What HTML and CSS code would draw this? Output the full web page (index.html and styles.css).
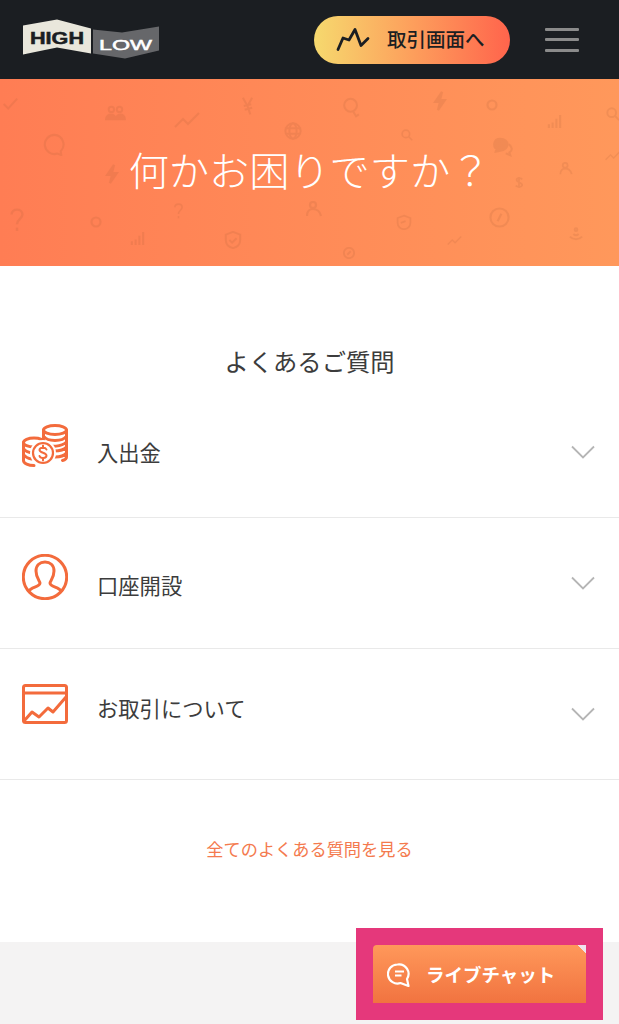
FILE: index.html

```html
<!DOCTYPE html>
<html lang="ja">
<head>
  <meta charset="UTF-8">
  <title>何かお困りですか？</title>
  <link rel="stylesheet" href="styles.css">
</head>
<body>

  <svg class="defs" width="0" height="0">
    <symbol id="i-check" viewBox="0 0 20 20"><path d="M3 10l5 5 10-11"/></symbol>
    <symbol id="i-people" viewBox="0 0 24 20"><circle cx="8" cy="6" r="3"/><circle cx="17" cy="6" r="3"/><path class="fill" d="M2 17c0-7 11-7 11 0zM13 17c0-7 10-7 10 0z"/></symbol>
    <symbol id="i-trend" viewBox="0 0 26 16"><path d="M1 15l8-8 5 5 11-11"/></symbol>
    <symbol id="i-yen" viewBox="0 0 14 20"><path d="M2 1l5 9 5-9M7 10l3 9M3 10l8-2M4 14l8-2"/></symbol>
    <symbol id="i-globe" viewBox="0 0 20 20"><circle cx="10" cy="10" r="8.500"/><ellipse cx="10" cy="10" rx="4" ry="8.500"/><path d="M2 7h16M2 13h16"/></symbol>
    <symbol id="i-bubble" viewBox="0 0 24 24"><path d="M12 2a10 10 0 1 0 3 19.500l4 1.500-.5-4A10 10 0 0 0 12 2z"/></symbol>
    <symbol id="i-bolt" viewBox="0 0 14 20"><path class="fill" d="M9 1L2 11h5l-2 8 7-10H7z"/></symbol>
    <symbol id="i-question" viewBox="0 0 14 22"><path d="M2 6c0-6 10-6 10 0 0 4-5 4-5 9"/><path d="M7 18v3"/></symbol>
    <symbol id="i-gear" viewBox="0 0 14 14"><circle cx="7" cy="7" r="4.500"/></symbol>
    <symbol id="i-bars" viewBox="0 0 16 16"><path d="M2 15v-4M6 15V9M10 15V5M14 15V1"/></symbol>
    <symbol id="i-shield" viewBox="0 0 20 20"><path d="M10 1l8 3v6c0 5-4 8-8 9-4-1-8-4-8-9V4z"/><path d="M6 10l3 3 5-5"/></symbol>
    <symbol id="i-bulb" viewBox="0 0 18 24"><circle cx="8" cy="9" r="7"/><path d="M11 16l3 5 3-2"/></symbol>
    <symbol id="i-search" viewBox="0 0 16 16"><circle cx="6.500" cy="6.500" r="5"/><path d="M10 10l5 5"/></symbol>
    <symbol id="i-chats" viewBox="0 0 24 20"><path class="fill" d="M9 1c5 0 8 3 8 6s-3 7-8 7l-5 1 1-3C1 10 1 1 9 1z"/><path d="M18 7c4 2 5 7 1 9l1 3-5-2"/></symbol>
    <symbol id="i-person" viewBox="0 0 16 16"><circle cx="7" cy="4" r="3"/><path d="M1 15c0-5 3-7 6-7s7 2 8 7"/></symbol>
    <symbol id="i-dollar" viewBox="0 0 10 16"><path d="M9 4C7 2 2 2 2 5s7 3 7 6-6 3-8 1M5 1v14"/></symbol>
    <symbol id="i-face" viewBox="0 0 20 20"><path d="M10 2l8 3v6a8 8 0 0 1-16 0V5z"/><path d="M6 11l6-2"/></symbol>
    <symbol id="i-compass" viewBox="0 0 22 22"><circle cx="11" cy="11" r="9.500"/><path d="M9 15l4-8"/></symbol>
    <symbol id="i-signal" viewBox="0 0 16 16"><circle cx="8" cy="3" r="1.500"/><path d="M5 8c2 2 4 2 6 0M1 11c4 4 10 4 14 0"/></symbol>
    <symbol id="i-clock" viewBox="0 0 14 14"><circle cx="7" cy="7" r="6"/><path d="M5 9l4-4"/></symbol>
  </svg>

  <header class="site-header">
    <a class="logo" href="#">
      <svg width="138" height="42" viewBox="0 0 138 42">
        <polygon points="1,6.500 35,0.500 69,9.500 69,34.500 35,28.500 1,35.500" fill="#e9e7dc"/>
        <polygon points="71,10.500 100,13.500 137,7.500 137,31.500 103,39.500 71,34.500" fill="#66676a"/>
        <text class="logo-high" x="8" y="24.500" textLength="54" lengthAdjust="spacingAndGlyphs">HIGH</text>
        <text class="logo-low" x="77" y="30.500" textLength="53" lengthAdjust="spacingAndGlyphs">LOW</text>
      </svg>
    </a>
    <a class="trade-btn" href="#">
      <svg width="34" height="26" viewBox="0 0 34 26"><path d="M2 22.500L7 11l6 2 6-10.500 6 16 7-7" fill="none" stroke="#1b1e22" stroke-width="2.800" stroke-linecap="round" stroke-linejoin="round"/></svg>
      <span>取引画面へ</span>
    </a>
    <button class="menu-btn" aria-label="menu"><i></i><i></i><i></i></button>
  </header>

  <section class="hero">
    <svg class="hero-icons" width="619" height="187" viewBox="0 0 619 187">
      <use href="#i-check" x="1" y="16" width="18" height="18"/>
      <use href="#i-people" x="104" y="25" width="22" height="18"/>
      <use href="#i-trend" x="174" y="33" width="26" height="16"/>
      <use href="#i-yen" x="241" y="17" width="13" height="20"/>
      <use href="#i-globe" x="284" y="43" width="18" height="18"/>
      <use href="#i-bubble" x="43" y="54" width="23" height="23"/>
      <use href="#i-bolt" x="105" y="85" width="14" height="20"/>
      <use class="heavy" href="#i-question" x="9" y="129" width="16" height="24"/>
      <use class="heavy" href="#i-gear" x="89" y="136" width="14" height="14"/>
      <use href="#i-question" x="172" y="124" width="13" height="16"/>
      <use href="#i-bars" x="130" y="152" width="15" height="15"/>
      <use href="#i-shield" x="224" y="152" width="18" height="18"/>
      <use href="#i-bulb" x="343" y="18" width="17" height="22"/>
      <use href="#i-bolt" x="433" y="12" width="14" height="20"/>
      <use class="heavy" href="#i-gear" x="485" y="19" width="14" height="14"/>
      <use href="#i-bars" x="547" y="35" width="15" height="15"/>
      <use href="#i-search" x="606" y="28" width="14" height="14"/>
      <use href="#i-search" x="401" y="50" width="12" height="12"/>
      <use href="#i-chats" x="492" y="58" width="22" height="20"/>
      <use href="#i-trend" x="605" y="71" width="16" height="11"/>
      <use href="#i-person" x="559" y="83" width="14" height="13"/>
      <use href="#i-dollar" x="515" y="97" width="8" height="13"/>
      <use href="#i-person" x="306" y="122" width="16" height="16"/>
      <use href="#i-face" x="396" y="135" width="16" height="16"/>
      <use href="#i-compass" x="489" y="128" width="21" height="21"/>
      <use href="#i-trend" x="447" y="157" width="15" height="9"/>
      <use href="#i-signal" x="569" y="148" width="14" height="14"/>
      <use href="#i-clock" x="343" y="168" width="12" height="12"/>
    </svg>
    <h1 class="hero-title">何かお困りですか？</h1>
  </section>

  <main class="faq">
    <h2 class="faq-title">よくあるご質問</h2>

    <div class="faq-row">
      <svg class="faq-icon faq-icon-coins" width="46" height="46" viewBox="0 0 46 46">
        <ellipse cx="33" cy="7" rx="11.500" ry="4.500"/>
        <path d="M21.500 7v9M44.500 7v27c0 2-2 3-4 3.500M21.500 13c2 3 6 4.500 11.500 4.500s9.500-1.500 11.500-4.500M24 22c5 2 15 2 20.500-3M32 28c5 0 10-1 12.500-4M33 34c5 0 9-1 11.500-4"/>
        <ellipse cx="12" cy="19.500" rx="10.500" ry="4.500"/>
        <path d="M1.500 19.500v18c0 3 5 5 10.500 5M1.500 25.500c2 3 5 4 9 4.500M1.500 31.500c2 3 5 4 8 4.500"/>
        <circle class="coin" cx="21" cy="30" r="13"/>
        <circle cx="21" cy="30" r="10" stroke-width="2.200"/>
        <path d="M24.500 26.500c-1-2.500-7-2.500-7 .5s7 2.500 7 5.500-6 3.500-7 .5M21 22.500v2.500M21 35v2.500" stroke-width="2"/>
      </svg>
      <span class="faq-label">入出金</span>
      <svg class="chevron" width="24" height="14" viewBox="0 0 24 14"><path d="M1 1.500l11 11 11-11"/></svg>
    </div>

    <div class="faq-row">
      <svg class="faq-icon faq-icon-user" width="46" height="46" viewBox="0 0 46 46">
        <circle cx="23" cy="23" r="21.700"/>
        <path d="M7 37c2-4 11-4 11-8 0-2-4-5-4-12 0-6 4-9 9-9s9 3 9 9c0 7-4 10-4 12 0 4 9 4 11 8"/>
      </svg>
      <span class="faq-label faq-label-low">口座開設</span>
      <svg class="chevron" width="24" height="14" viewBox="0 0 24 14"><path d="M1 1.500l11 11 11-11"/></svg>
    </div>

    <div class="faq-row">
      <svg class="faq-icon faq-icon-chart" width="46" height="40" viewBox="0 0 46 40">
        <rect x="1.500" y="1.500" width="43" height="37" rx="2"/>
        <path d="M1.500 9h43M2 37l8-9 7 5 9-9 5 4 13-15"/>
      </svg>
      <span class="faq-label faq-label-chart">お取引について</span>
      <svg class="chevron" width="24" height="14" viewBox="0 0 24 14"><path d="M1 1.500l11 11 11-11"/></svg>
    </div>

    <a class="faq-all" href="#">全てのよくある質問を見る</a>
  </main>

  <footer class="page-foot"></footer>

  <div class="chat-frame">
    <a class="chat-btn" href="#">
      <svg width="26" height="26" viewBox="0 0 26 26"><path d="M10.500 3.500a9.500 9.500 0 1 0 3 18.500l8 3-1.500-7a9.500 9.500 0 0 0-9.500-14.500z" fill="none" stroke="#fff" stroke-width="2.200" stroke-linejoin="round"/><path d="M8 10.500h9M8 14.500h6.500" stroke="#fff" stroke-width="2" fill="none"/></svg>
      <span>ライブチャット</span>
    </a>
  </div>

</body>
</html>
```

FILE: styles.css

```css
* {
  box-sizing: border-box;
}
html, body {
  margin: 0;
  padding: 0;
}
body {
  position: relative;
  display: flex;
  flex-direction: column;
  height: 1024px;
  overflow: hidden;
  background-color: #fff;
  color: #3c3c3c;
  font-family: "Noto Sans CJK JP", "Noto Sans", sans-serif;
}
a {
  text-decoration: none;
}
.defs {
  position: absolute;
}
symbol {
  fill: none;
  stroke: #a85a34;
  stroke-width: 2.200;
}
symbol .fill {
  fill: #a85a34;
}
.heavy {
  stroke-width: 3.500;
}

/* header */
.site-header {
  display: flex;
  align-items: center;
  flex: 0 0 79px;
  padding: 0 40px 0 22px;
  background-color: #1b1e22;
}
.logo {
  display: block;
  height: 42px;
}
.logo-high {
  font-family: "Liberation Sans", sans-serif;
  font-size: 16px;
  font-weight: 700;
  fill: #1b1e22;
  stroke: #1b1e22;
  stroke-width: .5px;
}
.logo-low {
  font-family: "Liberation Sans", sans-serif;
  font-size: 15.500px;
  fill: #fff;
  stroke: #fff;
  stroke-width: .5px;
}
.trade-btn {
  display: flex;
  align-items: center;
  width: 196px;
  height: 48px;
  margin-left: auto;
  padding-left: 22px;
  border-radius: 24px;
  background: linear-gradient(90deg, #f6d96e 0%, #fd9f5c 50%, #ff644c 100%);
  color: #1b1e22;
  font-size: 19.500px;
  font-weight: 500;
}
.trade-btn span {
  margin: -3px 0 0 17px;
  white-space: nowrap;
}
.menu-btn {
  display: flex;
  flex-direction: column;
  gap: 7.500px;
  width: 34px;
  margin-left: 35px;
  padding: 0;
  border: none;
  background: none;
}
.menu-btn i {
  display: block;
  height: 3px;
  border-radius: 1px;
  background-color: #8b8b8b;
}

/* hero */
.hero {
  position: relative;
  display: flex;
  align-items: center;
  justify-content: center;
  flex: 0 0 187px;
  background: linear-gradient(90deg, #ff7d54 0%, #ff985b 100%);
}
.hero-icons {
  position: absolute;
  top: 0;
  left: 0;
  opacity: .15;
}
.hero-title {
  position: relative;
  margin: -6px 0 0 0;
  color: #fff;
  font-size: 40.200px;
  font-weight: 300;
  line-height: 1;
}

/* faq */
.faq {
  display: flex;
  flex-direction: column;
  flex: 0 0 676px;
}
.faq-title {
  height: 121px;
  margin: 0;
  padding-top: 78px;
  color: #3c3c3c;
  font-size: 24.300px;
  font-weight: 400;
  line-height: 34px;
  text-align: center;
}
.faq-row {
  display: flex;
  align-items: center;
  height: 131px;
  padding: 0 24px 0 22px;
  border-bottom: 1px solid #e9e9e9;
}
.faq-icon {
  flex: none;
  width: 46px;
  fill: none;
  stroke: #f36b3c;
  stroke-width: 3;
  stroke-linejoin: round;
  stroke-linecap: round;
}
.faq-icon .coin {
  fill: #fff;
  stroke: none;
}
.faq-icon-coins {
  margin-bottom: 12px;
}
.faq-icon-user {
  margin-bottom: 12px;
}
.faq-icon-chart {
  margin-bottom: 20px;
}
.faq-label {
  margin: 0 0 0 29px;
  font-size: 21.300px;
  line-height: 30px;
}
.faq-label-low {
  margin-top: 4px;
}
.faq-label-chart {
  margin-top: -12px;
}
.chevron {
  margin-left: auto;
  fill: none;
  stroke: #b5b5b5;
  stroke-width: 1.800;
}
.faq-all {
  margin-top: 56px;
  color: #f47a4e;
  font-size: 17.200px;
  line-height: 25px;
  text-align: center;
}

.page-foot {
  flex: 1;
  background-color: #f4f3f3;
}

/* chat */
.chat-frame {
  position: absolute;
  top: 928px;
  left: 356px;
  width: 247px;
  height: 92px;
  padding: 17px;
  background-color: #e5387b;
}
.chat-btn {
  display: flex;
  align-items: center;
  height: 58px;
  padding-left: 14px;
  border-radius: 4px 0 0 0;
  background: linear-gradient(225deg, #efe3ee 0, #efe3ee 6px, transparent 6px),
    linear-gradient(180deg, #ff985a 0%, #f17340 100%);
  color: #fff;
  font-size: 18.500px;
  font-weight: 700;
}
.chat-btn span {
  margin-left: 13px;
  white-space: nowrap;
}
```
